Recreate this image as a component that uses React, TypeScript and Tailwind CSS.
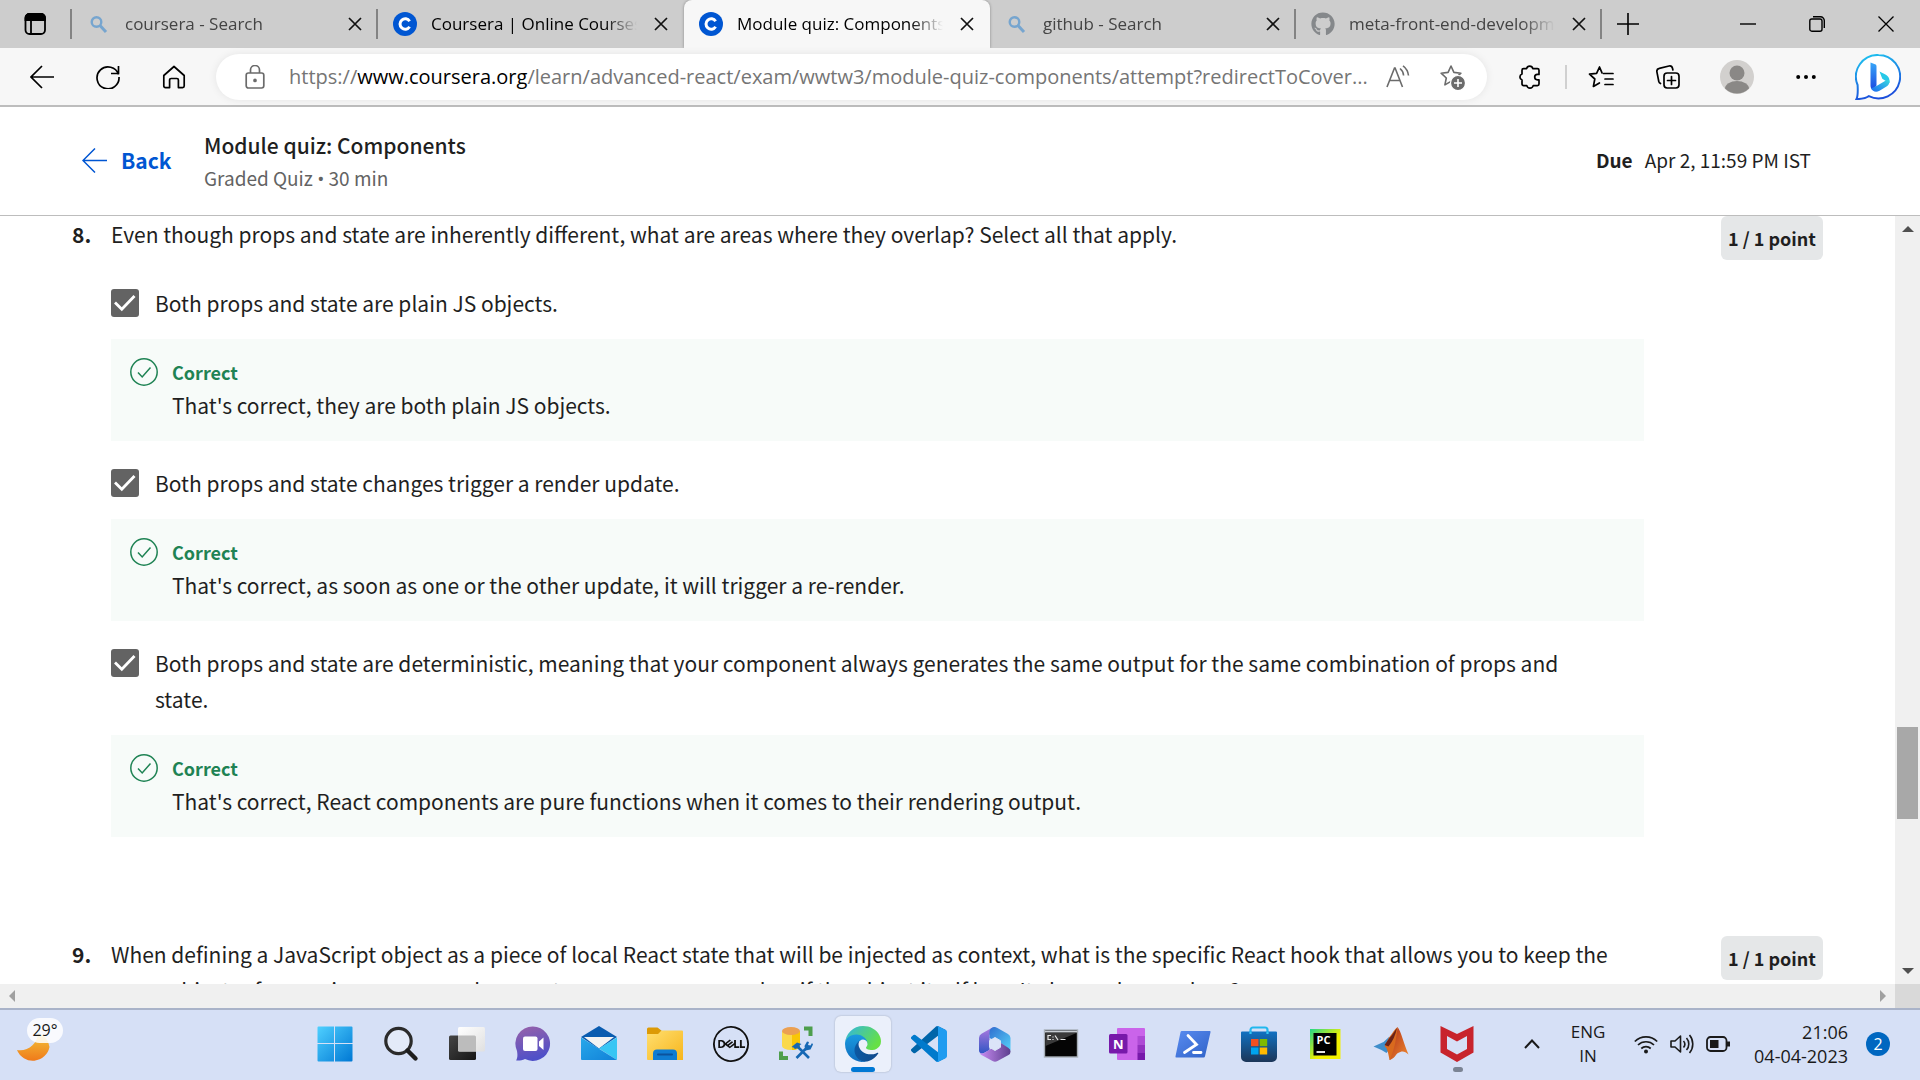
import type { ReactNode } from "react";
import { FaGithub } from "react-icons/fa";
import { SiDell } from "react-icons/si";

const UI = "font-['Open_Sans','Noto_Sans',sans-serif]";

type Option = { label: string; feedback: string };

const options: Option[] = [
  {
    label: "Both props and state are plain JS objects.",
    feedback: "That's correct, they are both plain JS objects.",
  },
  {
    label: "Both props and state changes trigger a render update.",
    feedback: "That's correct, as soon as one or the other update, it will trigger a re-render.",
  },
  {
    label:
      "Both props and state are deterministic, meaning that your component always generates the same output for the same combination of props and state.",
    feedback: "That's correct, React components are pure functions when it comes to their rendering output.",
  },
];

/* ---------- Tab strip ---------- */

function SearchFavicon() {
  return (
    <svg viewBox="0 0 24 24" className="size-6" fill="none" stroke="#76a5cf" strokeWidth="2.4">
      <circle cx="9.5" cy="10" r="4.8" />
      <path d="M13 13.5l6 6.5" strokeWidth="3" />
    </svg>
  );
}

function CourseraFavicon() {
  return (
    <svg viewBox="0 0 24 24" className="size-6">
      <circle cx="12" cy="12" r="12" fill="#0056d2" />
      <path d="M16.6 9.2a5.2 5.2 0 1 0 0 5.6" fill="none" stroke="#fff" strokeWidth="3" />
    </svg>
  );
}

function Tab({ icon, title, active, dim, bar }: { icon: ReactNode; title: string; active?: boolean; dim?: boolean; bar?: boolean }) {
  return (
    <div
      className={
        "flex h-12 w-[306px] min-w-0 items-center pl-[15px] " +
        (active ? "rounded-t-lg bg-[#f7f7f7] shadow-[0_0_3px_rgba(0,0,0,0.35)]" : "")
      }
    >
      {icon}
      <button
        className={
          "ml-3.5 mr-3 h-6 min-w-0 flex-1 overflow-hidden whitespace-nowrap text-left text-[17px] leading-6 [mask-image:linear-gradient(to_right,black_84%,transparent)] " +
          (dim ? "text-[#444]" : "text-black")
        }
      >
        {title}
      </button>
      <button aria-label={"Close " + title} className="mr-[9px] flex size-6 items-center justify-center">
        <svg viewBox="0 0 14 14" className="size-3.5" stroke="#111" strokeWidth="1.7">
          <path d="M1 1l12 12M13 1L1 13" />
        </svg>
      </button>
      <span className={"h-[30px] w-0.5 " + (bar ? "bg-[#838383]" : "bg-transparent")} />
    </div>
  );
}

function TabStrip() {
  return (
    <div className="flex h-12 shrink-0 items-center bg-[#cdcdcd]">
      <button aria-label="Tab actions" className="flex w-[70px] items-center justify-center">
        <svg viewBox="0 0 24 24" className="size-6" fill="none" stroke="#000" strokeWidth="1.8">
          <rect x="2.5" y="2" width="19.500" height="20" rx="4" />
          <path d="M2.500 8V6a4 4 0 0 1 4-4H18a4 4 0 0 1 4 4v2z" fill="#000" />
          <path d="M8 8v14" />
        </svg>
      </button>
      <span className="h-[30px] w-0.5 bg-[#838383]" />
      <Tab icon={<SearchFavicon />} title="coursera - Search" dim bar />
      <Tab icon={<CourseraFavicon />} title="Coursera | Online Courses" />
      <Tab icon={<CourseraFavicon />} title="Module quiz: Components" active />
      <Tab icon={<SearchFavicon />} title="github - Search" dim bar />
      <Tab icon={<FaGithub className="size-6 shrink-0 text-[#85888b]" />} title="meta-front-end-developm" dim bar />
      <button aria-label="New tab" className="flex w-[52px] items-center justify-center">
        <svg viewBox="0 0 22 22" className="size-[22px]" stroke="#000" strokeWidth="1.6">
          <path d="M11 0v22M0 11h22" />
        </svg>
      </button>
      <div className="ml-auto flex">
        <button aria-label="Minimize" className="flex h-12 w-[69px] items-center justify-center">
          <svg viewBox="0 0 16 16" className="size-4" stroke="#000" strokeWidth="1.4">
            <path d="M0 8h16" />
          </svg>
        </button>
        <button aria-label="Restore" className="flex h-12 w-[69px] items-center justify-center">
          <svg viewBox="0 0 16 16" className="size-4" fill="none" stroke="#000" strokeWidth="1.4">
            <rect x="0.8" y="3" width="12.2" height="12.2" rx="2" />
            <path d="M4 .8h7.5a3.8 3.8 0 0 1 3.8 3.8V12" />
          </svg>
        </button>
        <button aria-label="Close window" className="flex h-12 w-[69px] items-center justify-center">
          <svg viewBox="0 0 16 16" className="size-4" stroke="#000" strokeWidth="1.3">
            <path d="M.5.5l15 15M15.5.5l-15 15" />
          </svg>
        </button>
      </div>
    </div>
  );
}

/* ---------- Toolbar ---------- */

function ToolButton({ label, width, children }: { label: string; width: string; children: ReactNode }) {
  return (
    <button aria-label={label} className={"flex h-12 shrink-0 items-center justify-center " + width}>
      {children}
    </button>
  );
}

function Star() {
  return <path d="M12 2l2.9 6.4 7 .8-5.2 4.8 1.4 6.9L12 17.4l-6.1 3.5 1.4-6.9L2.1 9.2l7-.8z" />;
}

function Toolbar() {
  return (
    <div className="flex h-[59px] shrink-0 items-center border-b-2 border-[#bdbdbd] bg-[#f7f7f7]">
      <div className="flex w-[216px] shrink-0 pl-2">
        <ToolButton label="Back" width="w-[67px]">
          <svg viewBox="0 0 24 24" className="size-6" fill="none" stroke="#000" strokeWidth="1.7">
            <path d="M24 12H1M12 1L1 12l11 11" />
          </svg>
        </ToolButton>
        <ToolButton label="Refresh" width="w-[66px]">
          <svg viewBox="0 0 24 24" className="size-6" fill="none" stroke="#000" strokeWidth="1.7">
            <path d="M22.5 9.5A11 11 0 1 0 23 12M22.5 1v7.5H15" />
          </svg>
        </ToolButton>
        <ToolButton label="Home" width="w-[66px]">
          <svg viewBox="0 0 24 24" className="size-6" fill="none" stroke="#000" strokeWidth="1.7" strokeLinejoin="round">
            <path d="M1.8 10.5L12 1.5l10.2 9V21a1.6 1.6 0 0 1-1.6 1.6h-4.2V15a1.5 1.5 0 0 0-1.5-1.5H9.1A1.5 1.5 0 0 0 7.6 15v7.6H3.4A1.6 1.6 0 0 1 1.8 21z" />
          </svg>
        </ToolButton>
      </div>
      <div className="flex h-[46px] min-w-0 flex-1 items-center rounded-full bg-white shadow-[0_0_8px_rgba(0,0,0,0.08)]">
        <button aria-label="View site information" className="flex w-[73px] shrink-0 items-center justify-center pl-1">
          <svg viewBox="0 0 20 24" className="h-6 w-5" fill="none" stroke="#6b6b6b" strokeWidth="1.7">
            <rect x="1.2" y="8" width="17.6" height="15" rx="2.2" />
            <path d="M5.5 8V5a4.5 4.5 0 0 1 9 0v3" />
            <circle cx="10" cy="15.4" r="1" fill="#6b6b6b" />
          </svg>
        </button>
        <label className="flex min-w-0 flex-1 items-center text-[20px] leading-7 text-[#757575]">
          <span>https://</span>
          <span className="text-black">www.coursera.org</span>
          <input
            aria-label="Address"
            className="min-w-0 flex-1 bg-transparent outline-none"
            defaultValue="/learn/advanced-react/exam/wwtw3/module-quiz-components/attempt?redirectToCover..."
          />
        </label>
        <ToolButton label="Read aloud" width="w-[54px]">
          <svg viewBox="0 0 24 24" className="size-6" fill="none" stroke="#6b6b6b" strokeWidth="1.6">
            <path d="M1 22L8.500 3h.6L16.500 22M3.600 15.500h10.200" />
            <path d="M14 3.500a10 10 0 0 1 3.600 7M17 .8a14 14 0 0 1 5.500 9.700" />
          </svg>
        </ToolButton>
        <ToolButton label="Add to favorites" width="w-[54px]">
          <svg viewBox="0 0 26 26" className="size-[26px]" fill="none" stroke="#6b6b6b" strokeWidth="1.6" strokeLinejoin="round">
            <Star />
            <circle cx="19" cy="19" r="7.5" fill="#6b6b6b" stroke="#fff" strokeWidth="1.2" />
            <path d="M19 15v8M15 19h8" stroke="#fff" />
          </svg>
        </ToolButton>
        <span className="w-2" />
      </div>
      <div className="flex w-[433px] shrink-0 items-center pl-2.5">
        <ToolButton label="Extensions" width="w-[66px]">
          <svg viewBox="0 0 24 24" className="size-6" fill="none" stroke="#000" strokeWidth="1.7" strokeLinejoin="round">
            <path d="M8.600 3.600a3.200 3.200 0 0 1 6.200 0h4.600a1.600 1.600 0 0 1 1.600 1.600v4.200h-1.600a2.700 2.700 0 0 0 0 5.400H21V19a1.600 1.600 0 0 1-1.600 1.600h-4.200a3.300 3.300 0 0 1-6.400 0H5.600A1.600 1.600 0 0 1 4 19v-4a3.200 3.200 0 0 1 0-6V5.200a1.600 1.600 0 0 1 1.600-1.600z" />
          </svg>
        </ToolButton>
        <span className="ml-0.5 h-6 w-0.5 bg-[#d0d0d0]" />
        <ToolButton label="Favorites" width="w-[68px]">
          <svg viewBox="0 0 26 24" className="h-6 w-[26px]" fill="none" stroke="#000" strokeWidth="1.7" strokeLinejoin="round" strokeLinecap="round">
            <path d="M15.500 8.500H25M17 14h8M17 19.500h8M14 7.800L11.500 2 8.600 8.400 1.500 9.200l5.300 4.800-1.400 7.400 6-3.500" />
          </svg>
        </ToolButton>
        <ToolButton label="Collections" width="w-[66px]">
          <svg viewBox="0 0 24 24" className="size-6" fill="none" stroke="#000" strokeWidth="1.7" strokeLinecap="round">
            <rect x="8" y="8" width="15" height="15" rx="3.200" />
            <path d="M15.500 11.500v8M11.500 15.500h8M4.500 18.500a3 3 0 0 1-1.700-2L.9 6.800a3 3 0 0 1 2.400-3.400L13 1a3 3 0 0 1 3.500 2.300L16.900 5" />
          </svg>
        </ToolButton>
        <ToolButton label="Profile" width="w-[72px]">
          <svg viewBox="0 0 34 34" className="size-[34px]">
            <circle cx="17" cy="17" r="17" fill="#d2d0ce" />
            <circle cx="17" cy="13" r="7.500" fill="#8a8886" />
            <path d="M5 28.500a12 7.500 0 0 1 24 0 17 17 0 0 1-24 0z" fill="#8a8886" />
          </svg>
        </ToolButton>
        <ToolButton label="Settings and more" width="w-[66px]">
          <svg viewBox="0 0 20 6" className="h-1.5 w-5">
            <circle cx="2.200" cy="3" r="2" />
            <circle cx="10" cy="3" r="2" />
            <circle cx="17.800" cy="3" r="2" />
          </svg>
        </ToolButton>
        <ToolButton label="Bing chat" width="w-[78px]">
          <svg viewBox="0 0 46 46" className="size-[46px]">
            <defs>
              <linearGradient id="bingRing" x1="0" y1="0" x2="0.300" y2="1">
                <stop offset="0" stopColor="#1fc9f0" />
                <stop offset="1" stopColor="#1b4fdc" />
              </linearGradient>
              <linearGradient id="bingB" x1="0" y1="0" x2="0" y2="1">
                <stop offset="0" stopColor="#37a6f8" />
                <stop offset="1" stopColor="#1b48e0" />
              </linearGradient>
              <linearGradient id="bingSwoosh" x1="1" y1="0" x2="0" y2="1">
                <stop offset="0" stopColor="#37d8e0" />
                <stop offset="1" stopColor="#1c6bf2" />
              </linearGradient>
            </defs>
            <path d="M23.500 1a21.700 21.700 0 1 1-9.600 41.200C9 45.500 5 45 1.500 45 3 42 3 38 2.600 31A21.700 21.700 0 0 1 23.500 1z" fill="#fff" stroke="url(#bingRing)" strokeWidth="2" />
            <path d="M15.500 8.500l4.500 1.800c1 .4 1.500 1 1.500 2.200v19L18 36c-1.600-1-2.500-2.400-2.500-4.500z" fill="url(#bingB)" />
            <path d="M24.500 17.500l5.500 2.700a7.500 7.500 0 0 1 4.500 6.800v2L30 26.500l-2.700-1.700z" fill="#27c9e8" />
            <path d="M34.500 27c0 2.800-1 4.300-3 5.500l-7 4.200c-3.500 2-7 .7-8.500-2.200l5.500-2.500 8.500-5c2-1.200 4.500-1.200 4.500 0z" fill="url(#bingSwoosh)" />
          </svg>
        </ToolButton>
      </div>
    </div>
  );
}

/* ---------- Quiz page ---------- */

function PageHeader() {
  return (
    <header className="flex h-[109px] shrink-0 items-center border-b border-[#bdbdbd] bg-white pb-0.5 pl-[82px] pr-[109px] text-[#1f1f1f]">
      <a href="#back" className="flex w-[122px] shrink-0 items-center gap-3.5 text-[21px] font-bold leading-7 text-[#0056d2]">
        <svg viewBox="0 0 25 25" className="size-[25px]" fill="none" stroke="#0056d2" strokeWidth="1.500">
          <path d="M25 12.500H1M13 .5l-12 12 12 12" />
        </svg>
        Back
      </a>
      <div className="min-w-0">
        <h1 className="text-[21px] font-medium leading-9">Module quiz: Components</h1>
        <p className="text-[19px] leading-[30px] text-[#636363]">
          Graded Quiz <span className="font-['Open_Sans',sans-serif]">•</span> 30 min
        </p>
      </div>
      <p className="ml-auto flex gap-3 text-[19px] leading-7">
        <strong className="font-bold">Due</strong>
        <span>Apr 2, 11:59 PM IST</span>
      </p>
    </header>
  );
}

function OptionRow({ option, id }: { option: Option; id: string }) {
  return (
    <li className="flex flex-col gap-[18px]">
      <div className="flex gap-4 pr-12">
        <span className="relative mt-1 size-7 shrink-0">
          <input id={id} type="checkbox" defaultChecked className="block size-7 appearance-none rounded-[3px] bg-[#636363]" />
          <svg viewBox="0 0 28 28" className="pointer-events-none absolute inset-0 size-7" fill="none" stroke="#fff" strokeWidth="2.800">
            <path d="M4 13.500l6.800 6.800L23.500 7" />
          </svg>
        </span>
        <label htmlFor={id} className="min-w-0 flex-1">
          {option.label}
        </label>
      </div>
      <div className="flex gap-3.5 bg-[#f7fbf9] py-[18px] pl-[19px] pr-4">
        <svg viewBox="0 0 28 28" className="mt-px size-7 shrink-0" fill="none" stroke="#1f8354" strokeWidth="1.500">
          <circle cx="14" cy="14" r="13.200" />
          <path d="M8 14.500l4.200 4.500L20.500 9.500" />
        </svg>
        <div className="min-w-0">
          <p className="text-[18px] font-bold leading-[30px] text-[#1f8354]">Correct</p>
          <p>{option.feedback}</p>
        </div>
      </div>
    </li>
  );
}

function Question({ number, text, children }: { number: string; text: string; children?: ReactNode }) {
  return (
    <section className="flex items-start pl-[72px] pr-[72px]">
      <span className="w-[39px] shrink-0 font-bold">{number}</span>
      <div className="min-w-0 flex-1">
        <h2>{text}</h2>
        {children}
      </div>
      <span className="ml-[77px] w-[102px] shrink-0 whitespace-nowrap rounded-md bg-[#e5e7e8] text-center text-[18px] font-bold leading-[44px]">
        1 / 1 point
      </span>
    </section>
  );
}

function Arrow({ d, color }: { d: string; color: string }) {
  return (
    <svg viewBox="0 0 12 12" className="size-3" fill={color}>
      <path d={d} />
    </svg>
  );
}

function QuizArea() {
  return (
    <div className="flex min-h-0 flex-1">
      <div className="flex min-w-0 flex-1 flex-col">
        <main className="flex min-h-0 flex-1 flex-col gap-[99px] overflow-hidden bg-white text-[21px] leading-9 text-[#1f1f1f]">
          <Question
            number="8."
            text="Even though props and state are inherently different, what are areas where they overlap? Select all that apply."
          >
            <ul className="mt-[33px] flex flex-col gap-6">
              {options.map((o, i) => (
                <OptionRow key={o.label} option={o} id={"option-" + i} />
              ))}
            </ul>
          </Question>
          <Question
            number="9."
            text="When defining a JavaScript object as a piece of local React state that will be injected as context, what is the specific React hook that allows you to keep the same object reference in memory and prevent unnecessary re-renders if the object itself hasn't changed any values?"
          />
        </main>
        <div className="flex h-6 shrink-0 items-center justify-between bg-[#f0f0f0] px-1.5">
          <Arrow d="M9 0v12L3 6z" color="#a0a0a0" />
          <Arrow d="M3 0v12l6-6z" color="#a0a0a0" />
        </div>
      </div>
      <div className="flex w-[25px] shrink-0 flex-col">
        <div className="flex min-h-0 flex-1 flex-col items-center bg-[#f0f0f0] pb-[7px] pt-[7px]">
          <Arrow d="M0 9h12L6 3z" color="#505050" />
          <span className="grow-[492]" />
          <span className="h-[92px] w-[21px] bg-[#a8a8a8]" />
          <span className="grow-[146]" />
          <Arrow d="M0 3h12L6 9z" color="#505050" />
        </div>
        <span className="h-6 bg-[#d9d9d9]" />
      </div>
    </div>
  );
}

/* ---------- Taskbar ---------- */

function Gradient({ id, from, to, x2 = "1", y2 = "1" }: { id: string; from: string; to: string; x2?: string; y2?: string }) {
  return (
    <linearGradient id={id} x1="0" y1="0" x2={x2} y2={y2}>
      <stop offset="0" stopColor={from} />
      <stop offset="1" stopColor={to} />
    </linearGradient>
  );
}

const apps: { name: string; open?: boolean; icon: ReactNode }[] = [
  {
    name: "Start",
    icon: (
      <>
        <Gradient id="start" from="#4fd0ff" to="#0078d4" />
        <path d="M1.500 .5H17V17H.5V1.500a1 1 0 0 1 1-1zM18 .5h16.500a1 1 0 0 1 1 1V17H18zM.5 18H17v17.500H1.500a1 1 0 0 1-1-1zM18 18h17.500v16.500a1 1 0 0 1-1 1H18z" fill="url(#start)" />
      </>
    ),
  },
  {
    name: "Search",
    icon: (
      <>
        <circle cx="15.500" cy="15" r="12.700" fill="#e3eaf8" stroke="#2b2b2b" strokeWidth="3.200" />
        <path d="M24.500 24.500l8 8" stroke="#1e1e1e" strokeWidth="4.400" strokeLinecap="round" />
      </>
    ),
  },
  {
    name: "Task view",
    icon: (
      <>
        <Gradient id="tvDark" from="#454545" to="#151515" />
        <Gradient id="tvLight" from="#ffffff" to="#e0e0e0" />
        <rect x="0" y="9.500" width="27" height="24.500" rx="1.500" fill="url(#tvDark)" />
        <rect x="9" y="1" width="27" height="24.500" rx="1.500" fill="url(#tvLight)" />
        <path d="M9 9.500h16.500A1.500 1.500 0 0 1 27 11v14.500H10.500A1.500 1.500 0 0 1 9 24z" fill="#bcbcbc" />
      </>
    ),
  },
  {
    name: "Chat",
    icon: (
      <>
        <Gradient id="chat" from="#9a62a8" to="#4f50c8" x2="0.300" />
        <path d="M18 .5a17.200 17.200 0 1 1-8 32.500C7 34.500 4 34.800 1.200 34.500c1.500-3 1.400-6 .8-9.500A17.200 17.200 0 0 1 18 .5z" fill="url(#chat)" />
        <rect x="8" y="10.500" width="14.500" height="14.500" rx="2" fill="#fff" />
        <path d="M24 15.500l4.500-4v12.500L24 20z" fill="#fff" />
      </>
    ),
  },
  {
    name: "Mail",
    icon: (
      <>
        <Gradient id="mail" from="#28a8ea" to="#1181d8" />
        <path d="M0 11L18 0l18 11-18 12z" fill="#0a5cb0" />
        <path d="M3 11h30L18 22.500z" fill="#f3f3f3" />
        <path d="M36 11.500v21.500a1 1 0 0 1-.4.800L18 22.500z" fill="#38c6f4" />
        <path d="M0 11.500L36 34H1a1 1 0 0 1-1-1z" fill="url(#mail)" />
      </>
    ),
  },
  {
    name: "File Explorer",
    icon: (
      <>
        <Gradient id="folder" from="#ffdf70" to="#f7b51c" />
        <path d="M0 3a1.500 1.500 0 0 1 1.500-1.500h9L15 5v6H0z" fill="#dc9a06" />
        <path d="M0 8h11l3.500-3.500h20.500a1 1 0 0 1 1 1V34H1a1 1 0 0 1-1-1z" fill="url(#folder)" />
        <path d="M6 34v-6.500a4 4 0 0 1 4-4h16a4 4 0 0 1 4 4V34z" fill="#0f7cd2" />
        <path d="M11 28.500h14" stroke="#0c529c" strokeWidth="2" strokeLinecap="round" />
      </>
    ),
  },
  { name: "Dell", icon: <SiDell size={36} color="#111" /> },
  {
    name: "Database tools",
    icon: (
      <>
        <path d="M3 5v15a9 4 0 0 0 18 0V5z" fill="#fbd94a" />
        <path d="M13 8v16c5 0 8-2 8-4V5z" fill="#f9c606" />
        <ellipse cx="12" cy="5" rx="9" ry="4" fill="#eba052" />
        <path d="M25 2.500h6.500V10M2 25.500V32h7" fill="none" stroke="#4d9e4c" strokeWidth="4" />
        <path d="M17.500 32L28 21.500M18.500 20.500L30 32" stroke="#1668b4" strokeWidth="2.600" />
        <path d="M12.500 21l5.500-4.500 4.500 1.500-2 1.500.5 2-5 1.500-1.500-1.500zM25.500 20l2.500-4.500 2 .5-1 3 2.500.5 1.500-2.500 1 1.500-2.500 5-5 1z" fill="#1668b4" />
      </>
    ),
  },
  {
    name: "Microsoft Edge",
    open: true,
    icon: (
      <g transform="scale(0.140625)">
        <Gradient id="edgeDark" from="#0c59a4" to="#114a8b" x2="1" y2="0" />
        <Gradient id="edgeBlue" from="#1b9de2" to="#0f6cbd" x2="0" />
        <Gradient id="edgeGreen" from="#2fb4e6" to="#66e045" x2="1" y2="0.500" />
        <path d="M231 190.500c-3.400 1.800-6.900 3.400-10.500 4.700a101.500 101.500 0 0 1-35.900 6.500c-47.300 0-88.500-32.500-88.500-74.300a31.500 31.500 0 0 1 16.400-27.300c-42.800 1.800-53.800 46.400-53.800 72.500 0 74 68.100 81.400 82.800 81.400 7.900 0 19.800-2.300 27-4.600l1.300-.4a128.300 128.300 0 0 0 66.600-52.800 4 4 0 0 0-5.400-5.700z" fill="url(#edgeDark)" />
        <path d="M105.700 241.400a79.200 79.200 0 0 1-22.700-21.300 80.700 80.700 0 0 1 29.500-120c3.200-1.500 8.500-4.100 15.600-4a32.400 32.400 0 0 1 25.700 13 31.900 31.900 0 0 1 6.300 18.700c0-.2 24.500-79.600-80-79.600-43.900 0-80 41.600-80 78.200a130.200 130.200 0 0 0 12.100 56 128 128 0 0 0 156.400 67 75.500 75.500 0 0 1-62.800-8z" fill="url(#edgeBlue)" />
        <path d="M152.300 148.900c-.9 1-3.400 2.500-3.400 5.600 0 2.600 1.700 5.100 4.700 7.200 14.400 10 41.500 8.700 41.600 8.700a59.600 59.600 0 0 0 30.300-8.300 61.400 61.400 0 0 0 30.400-52.900c.3-22.400-8-37.300-11.300-43.900C223.500 23.900 177.700 0 128 0A128 128 0 0 0 0 126.200c.5-36.500 36.800-66 80-66 3.500 0 23.500.3 42 10.100a72.600 72.600 0 0 1 30.900 29.300c6.100 10.600 7.200 24.100 7.200 29.500s-2.700 13.300-7.800 19.900z" fill="url(#edgeGreen)" />
      </g>
    ),
  },
  {
    name: "Visual Studio Code",
    icon: (
      <g transform="scale(0.360)">
        <path d="M96.500 10.800L75.900.9a6.200 6.200 0 0 0-7.100 1.200L1.300 63.600a4.200 4.200 0 0 0 0 6.200l5.500 5a4.200 4.200 0 0 0 5.300.2L93.400 13.400A4.100 4.100 0 0 1 100 16.700z" fill="#0065a9" />
        <path d="M96.500 89.200l-20.600 9.900a6.200 6.200 0 0 1-7.100-1.200L1.300 36.400a4.200 4.200 0 0 1 0-6.200l5.500-5a4.200 4.200 0 0 1 5.300-.2l81.300 61.600A4.100 4.100 0 0 0 100 83.300z" fill="#007acc" />
        <path d="M75.900 99.100a6.200 6.200 0 0 1-7.100-1.200c2.300 2.300 6.200.7 6.200-2.600V4.700c0-3.300-3.900-4.900-6.200-2.600a6.200 6.200 0 0 1 7.100-1.200l20.600 9.900a6.200 6.200 0 0 1 3.500 5.600v67.200a6.200 6.200 0 0 1-3.500 5.600z" fill="#1f9cf0" />
      </g>
    ),
  },
  {
    name: "Microsoft 365",
    icon: (
      <>
        <Gradient id="mA" from="#b07be0" to="#2f55c4" x2="0" />
        <Gradient id="mB" from="#2f6fd0" to="#55d0f8" />
        <Gradient id="mC" from="#c98cf4" to="#5d3f8e" x2="1" y2="0" />
        <path d="M18.500 1a5 5 0 0 0-3.500.7L4.500 7.800A5 5 0 0 0 2 12v12.500a3 3 0 0 0 4.500 2.700L12.500 24V9z" fill="url(#mA)" />
        <path d="M12.500 12V6c0-2.500 1.500-4.200 3.500-4.800a5 5 0 0 1 4 .5l11 6.200a5 5 0 0 1 2.500 4.200v12.500L24 17z" fill="url(#mB)" />
        <path d="M2.500 26.500c1 1 2.700 1.300 4.500.5L24 17l7.500 5a4 4 0 0 1 0 7L20.500 35a5 5 0 0 1-5 0L4.500 29a5 5 0 0 1-2-2.500z" fill="url(#mC)" />
        <path d="M18 11.500l5.500 3.200v6.600L18 24.500l-5.500-3.200v-6.600z" fill="#dbe4f8" stroke="#dbe4f8" strokeLinejoin="round" />
      </>
    ),
  },
  {
    name: "Command Prompt",
    icon: (
      <>
        <rect x="1.500" y="4" width="33" height="27" fill="#050505" stroke="#a8b0b8" strokeWidth="1.400" />
        <path d="M2 5h32v1.500H2z" fill="#c9ced4" />
        <path d="M2.500 7h31L2.500 20z" fill="#3a3a3a" />
        <path d="M8 9.500H5v4h3M10 10.500v1M10 13v1M12 9.500l3 4.500M17.500 13.500h5" fill="none" stroke="#e8e8e8" strokeWidth="1.200" />
      </>
    ),
  },
  {
    name: "OneNote",
    icon: (
      <>
        <path d="M8 3a1 1 0 0 1 1-1h26a1 1 0 0 1 1 1v31H9a1 1 0 0 1-1-1z" fill="#ca64ea" />
        <path d="M28.500 10H36v9h-7.500z" fill="#ae4bd5" />
        <path d="M28.500 19H36v7.500h-7.500z" fill="#9332bf" />
        <path d="M28.500 26.500H36V34h-7.500z" fill="#7719aa" />
        <rect x="0" y="8" width="18.500" height="19.500" rx="1.500" fill="#7719aa" />
        <text x="9.200" y="22.500" textAnchor="middle" fontSize="13" fontWeight="700" fill="#fff">N</text>
      </>
    ),
  },
  {
    name: "PowerShell",
    icon: (
      <>
        <Gradient id="ps" from="#5a8cf0" to="#2f62c8" />
        <path d="M6.500 5h28a1 1 0 0 1 1 1.300l-5.500 24a1.500 1.500 0 0 1-1.400 1.200H1.500a1 1 0 0 1-1-1.300l5-24A1.500 1.500 0 0 1 6.500 5z" fill="url(#ps)" />
        <path d="M13 9.500l8.500 9-12 8M18.500 26.500H26" fill="none" stroke="#fff" strokeWidth="2.800" strokeLinecap="round" />
      </>
    ),
  },
  {
    name: "Microsoft Store",
    icon: (
      <>
        <Gradient id="store" from="#1071c2" to="#1c3658" x2="0" />
        <path d="M9.500 8V4a2.500 2.500 0 0 1 2.500-2.500h12A2.500 2.500 0 0 1 26.500 4v4" fill="none" stroke="#22b8ee" strokeWidth="2.200" />
        <path d="M1 5.500h34a1 1 0 0 1 1 1V31a5 5 0 0 1-5 5H5a5 5 0 0 1-5-5V6.500a1 1 0 0 1 1-1z" fill="url(#store)" />
        <path d="M9.500 8V5.500M26.500 8V5.500" stroke="#35c8f5" strokeWidth="2.200" />
        <path d="M10 13h7.500v7.200H10z" fill="#f25022" />
        <path d="M18.700 13h7.500v7.200h-7.500z" fill="#7fba00" />
        <path d="M10 21.500h7.500v7H10z" fill="#00a4ef" />
        <path d="M18.700 21.500h7.500v7h-7.500z" fill="#ffb900" />
      </>
    ),
  },
  {
    name: "PyCharm",
    icon: (
      <>
        <Gradient id="pc" from="#21d789" to="#f2f000" x2="0.600" y2="0.600" />
        <rect x="3" y="3" width="30.500" height="30" fill="url(#pc)" />
        <rect x="6.500" y="7" width="23" height="22.500" fill="#000" />
        <text x="16.500" y="17.500" textAnchor="middle" fontSize="11" fontWeight="700" fill="#fff">PC</text>
        <path d="M9.500 26h8.500" stroke="#fff" strokeWidth="1.800" />
      </>
    ),
  },
  {
    name: "MATLAB",
    icon: (
      <>
        <Gradient id="ml" from="#b03018" to="#f08a30" />
        <path d="M.5 20.500L10.500 16 16 11l5 6.500-7.500 9.500-5-3z" fill="#3f8ecb" />
        <path d="M24.500 1c-3 2-5 6.500-8.500 10.500l-4.500 9c2 .5 3.500 4 5 13.500 3-1 6-3 8.500-9z" fill="#d96a1e" />
        <path d="M24.500 1c3.500 4 6.500 17.500 11 27.500-4-4-7-3.500-10.500-1.500-3 2-5 6-8.500 7 4-8 6.500-18 8-33z" fill="url(#ml)" />
        <path d="M24 2c-2 2-4 6.500-7.500 10l-5 7 4 1.500c4-5 7-11 8.500-18.500z" fill="#6b2318" />
      </>
    ),
  },
  {
    name: "McAfee",
    icon: (
      <path d="M1.500 0L18 8 34.500 0v26.500L18 36 1.500 26.500zM8 10v13l10 5.500L28 23V10l-10 5.500z" fill="#c8242c" fillRule="evenodd" />
    ),
  },
];

function Taskbar() {
  return (
    <footer className="flex h-[72px] shrink-0 items-center border-t-2 border-[#a9b3c9] bg-[#d6e0f6] pb-0.5 text-[#1a1a1a]">
      <button aria-label="Weather" className="relative h-14 w-[302px] shrink-0">
        <svg viewBox="0 0 34 34" className="absolute left-[17px] top-3.5 size-[34px]">
          <Gradient id="moon" from="#f3c53a" to="#ef7a1a" x2="0" />
          <path d="M0 20C10 22 21 14 21 3a17 17 0 0 1 11.500 14A17 17 0 0 1 0 20z" fill="url(#moon)" />
        </svg>
        <span className="absolute left-[27px] top-0.5 h-[25px] w-9 rounded-full bg-white/85 text-center text-[16px] leading-[25px]">29°</span>
      </button>
      <nav aria-label="Taskbar" className="flex">
        {apps.map((app) => (
          <div key={app.name} className="flex w-[66px] justify-center">
            <button
              aria-label={app.name}
              className={
                "relative flex size-[56px] items-center justify-center rounded-md " +
                (app.open ? "bg-[#ebf0fb] shadow-[0_0_2px_rgba(0,0,0,0.25)]" : "")
              }
            >
              <svg viewBox="0 0 36 36" className="size-9">
                {app.icon}
              </svg>
              {app.open && <span className="absolute bottom-0 left-4 h-[5px] w-6 rounded-full bg-[#0078d4]" />}
              {app.name === "McAfee" && <span className="absolute bottom-0 left-6 h-[5px] w-2.5 rounded-full bg-[#7b8494]" />}
            </button>
          </div>
        ))}
      </nav>
      <div className="ml-auto flex items-center pr-[30px] text-[17px] leading-6">
        <button aria-label="Show hidden icons" className="mr-7 flex items-center">
          <svg viewBox="0 0 16 10" className="h-2.5 w-4" fill="none" stroke="#1a1a1a" strokeWidth="2">
            <path d="M1 9l7-7.500L15 9" />
          </svg>
        </button>
        <button className="mr-[26px] w-10 text-center">
          ENG
          <br />
          IN
        </button>
        <button aria-label="Network, sound and battery" className="mr-5 flex items-center gap-3">
          <svg viewBox="0 0 24 24" className="size-6" fill="none" stroke="#1a1a1a" strokeWidth="1.700">
            <path d="M.8 9.500a16 16 0 0 1 22.400 0M4 13a11.500 11.500 0 0 1 16 0M7.300 16.500a7 7 0 0 1 9.400 0" />
            <circle cx="12" cy="19.500" r="2" fill="#1a1a1a" stroke="none" />
          </svg>
          <svg viewBox="0 0 24 24" className="size-6" fill="none" stroke="#1a1a1a" strokeWidth="1.600" strokeLinejoin="round">
            <path d="M1 9h4l5.500-5v16L5 15H1zM13.500 9a5 5 0 0 1 0 6.500M16.500 6a9 9 0 0 1 0 12M19.500 3a14 14 0 0 1 0 18" />
          </svg>
          <svg viewBox="0 0 24 24" className="size-6" fill="none" stroke="#1a1a1a" strokeWidth="1.800">
            <rect x="1" y="5" width="19.500" height="14" rx="3.500" />
            <rect x="4" y="8" width="8.500" height="8" fill="#1a1a1a" stroke="none" />
            <path d="M22.500 9.500v5" strokeWidth="3" />
          </svg>
        </button>
        <button className="mr-[18px] w-[98px] whitespace-nowrap text-right text-[18px]">
          21:06
          <br />
          04-04-2023
        </button>
        <button className="size-6 rounded-full bg-[#0067c0] text-[16px] leading-6 text-white" aria-label="2 notifications">
          2
        </button>
      </div>
    </footer>
  );
}

export default function App() {
  return (
    <div className={"flex h-screen flex-col overflow-hidden bg-white " + UI}>
      <TabStrip />
      <Toolbar />
      <div className="flex min-h-0 flex-1 flex-col font-['Noto_Sans_CJK_SC',sans-serif]">
        <PageHeader />
        <QuizArea />
      </div>
      <Taskbar />
    </div>
  );
}
